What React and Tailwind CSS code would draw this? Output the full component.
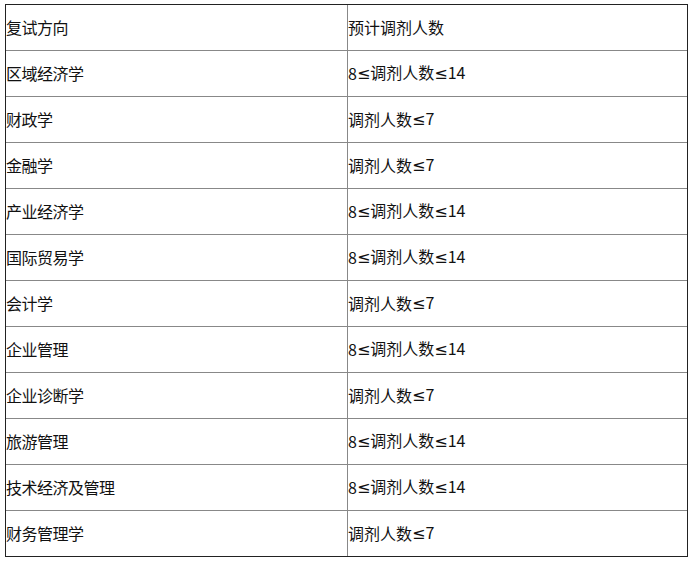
const rows = [
  ['复试方向', '预计调剂人数'],
  ['区域经济学', '8≤调剂人数≤14'],
  ['财政学', '调剂人数≤7'],
  ['金融学', '调剂人数≤7'],
  ['产业经济学', '8≤调剂人数≤14'],
  ['国际贸易学', '8≤调剂人数≤14'],
  ['会计学', '调剂人数≤7'],
  ['企业管理', '8≤调剂人数≤14'],
  ['企业诊断学', '调剂人数≤7'],
  ['旅游管理', '8≤调剂人数≤14'],
  ['技术经济及管理', '8≤调剂人数≤14'],
  ['财务管理学', '调剂人数≤7'],
];

// the ≤ sign in the screenshot is the wide one with a flat lower bar
const withLe = (s) =>
  s.split('≤').map((part, i) => (
    <span key={i}>
      {i > 0 && <span className="font-['DejaVu_Sans']">≤</span>}
      {part}
    </span>
  ));

export default function App() {
  return (
    <div className="w-[695px] h-[562px] bg-white pt-[4px] pl-[5px]" style={{ fontFamily: '"Noto Sans CJK SC", sans-serif' }}>
      <div className="w-[683px] border border-[#222]">
        {rows.map((r, i) => (
          <div key={i} className={`flex ${i > 0 ? 'border-t border-[#888]' : ''}`}>
            <div className="w-[342px] h-[45px] border-r border-[#888] flex items-center pb-[2px] text-[16px] text-[#111] tracking-[-0.5px]">
              {r[0]}
            </div>
            <div className="flex-1 h-[45px] flex items-center pb-[2px] text-[16px] text-[#111]">
              {withLe(r[1])}
            </div>
          </div>
        ))}
      </div>
    </div>
  );
}
